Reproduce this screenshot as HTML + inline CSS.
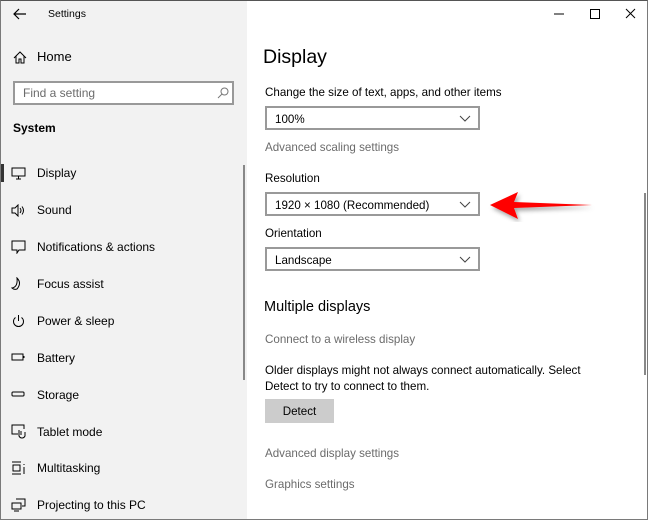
<!DOCTYPE html>
<html><head><style>
*{margin:0;padding:0;box-sizing:border-box}
body{width:648px;height:520px;overflow:hidden;font-family:"Liberation Sans",sans-serif;color:#000;position:relative;background:#fff}
.frame{position:absolute;left:0;top:0;width:648px;height:520px;border:1px solid #7a7a7a;border-top-color:#555;pointer-events:none;z-index:10}
.left{position:absolute;left:0;top:0;width:247px;height:520px;background:#f2f2f2}
.t{position:absolute;white-space:nowrap}
.s{font-size:12px}
.r{font-size:11.6px}
.g{color:#6b6b6b}
.dd{position:absolute;left:265px;width:215px;height:24px;border:2px solid #999;font-size:11.6px;padding:5px 0 0 8px}
.dd svg{position:absolute;right:7px;top:7px}
.ic{position:absolute;left:11px}
</style></head><body>
<div class="left">
<svg class="ic" style="left:13px;top:8px" width="14" height="12"><path d="M1 6H13M6 1L1 6L6 11" stroke="#000" fill="none" stroke-width="1.2"/></svg>
<div class="t" style="left:48px;top:8px;font-size:10.5px">Settings</div>
<svg class="ic" style="left:13px;top:51px" width="14" height="13"><path d="M1 7L7 1L13 7M3 5V12H6V8H8V12H11V5" stroke="#000" fill="none"/></svg>
<div class="t" style="left:37px;top:49px;font-size:13px">Home</div>
<div style="position:absolute;left:13px;top:81px;width:221px;height:24px;border:2px solid #999;background:#fff"></div>
<div class="t g" style="left:23px;top:86px;font-size:12px">Find a setting</div>
<svg style="position:absolute;left:217px;top:87px" width="12" height="12"><circle cx="7.5" cy="4.5" r="3.5" stroke="#777" fill="none"/><path d="M5 7L1 11" stroke="#777"/></svg>
<div class="t" style="left:13px;top:121px;font-size:12px;font-weight:bold">System</div>
<div style="position:absolute;left:0;top:164px;width:4px;height:18px;background:#333"></div>
<div style="position:absolute;left:243px;top:165px;width:2px;height:215px;background:#888"></div>
<svg class="ic" style="top:167px" width="16" height="13"><rect x="1" y="1" width="13" height="8" stroke="#000" fill="none"/><path d="M5 12H10M7.5 9V12" stroke="#000"/></svg>
<div class="t s" style="left:37px;top:166px">Display</div>
<svg class="ic" style="top:204px" width="16" height="13"><path d="M1 4H4L7 1V12L4 9H1Z M9 4Q11 6.5 9 9 M11 2.5Q14 6.5 11 10.5" stroke="#000" fill="none"/></svg>
<div class="t s" style="left:37px;top:203px">Sound</div>
<svg class="ic" style="top:240px" width="16" height="14"><path d="M1 1H14V10H8L6 13V10H1Z" stroke="#000" fill="none"/></svg>
<div class="t s" style="left:37px;top:240px">Notifications &amp; actions</div>
<svg class="ic" style="top:277px" width="16" height="14"><path d="M6 1Q11 6 6 12Q3 13 1 11Q7 10 6 1Z" stroke="#000" fill="none"/></svg>
<div class="t s" style="left:37px;top:277px">Focus assist</div>
<svg class="ic" style="top:314px" width="16" height="14"><path d="M4.5 3.5A5 5 0 1 0 10.5 3.5M7.5 1V7" stroke="#000" fill="none"/></svg>
<div class="t s" style="left:37px;top:314px">Power &amp; sleep</div>
<svg class="ic" style="top:352px" width="16" height="10"><rect x="1" y="2" width="11" height="6" stroke="#000" fill="none"/><path d="M13 4V6" stroke="#000"/></svg>
<div class="t s" style="left:37px;top:351px">Battery</div>
<svg class="ic" style="top:389px" width="16" height="10"><rect x="1" y="3" width="12" height="4" rx="1" stroke="#000" fill="none"/></svg>
<div class="t s" style="left:37px;top:388px">Storage</div>
<svg class="ic" style="top:424px" width="16" height="15"><path d="M7 10H1V1H13V5 M8 6V12Q9 14 11 14Q13 14 14 12V8 M10 7V11" stroke="#000" fill="none"/></svg>
<div class="t s" style="left:37px;top:425px">Tablet mode</div>
<svg class="ic" style="top:461px" width="16" height="14"><path d="M1 1H10M1 13H10M2 4H9V10H2ZM13 3V4M13 6V13" stroke="#000" fill="none"/></svg>
<div class="t s" style="left:37px;top:461px">Multitasking</div>
<svg class="ic" style="top:498px" width="16" height="14"><path d="M5 1H14V8H11M1 5H10V11H1ZM3 13H8" stroke="#000" fill="none"/></svg>
<div class="t s" style="left:37px;top:498px">Projecting to this PC</div>
</div>
<svg style="position:absolute;left:554px;top:7px" width="85" height="14"><path d="M0 7H10" stroke="#000"/><rect x="36.5" y="2.5" width="9" height="9" stroke="#000" fill="none"/><path d="M72 2L81 11M81 2L72 11" stroke="#000"/></svg>
<div class="t" style="left:263px;top:46px;font-size:19.5px">Display</div>
<div class="t r" style="left:265px;top:86px">Change the size of text, apps, and other items</div>
<div class="dd" style="top:106px">100%<svg width="12" height="7"><path d="M1 1L6 6L11 1" stroke="#444" fill="none"/></svg></div>
<div class="t r g" style="left:265px;top:141px">Advanced scaling settings</div>
<div class="t r" style="left:265px;top:172px">Resolution</div>
<div class="dd" style="top:192px">1920 × 1080 (Recommended)<svg width="12" height="7"><path d="M1 1L6 6L11 1" stroke="#444" fill="none"/></svg></div>
<div class="t r" style="left:265px;top:227px">Orientation</div>
<div class="dd" style="top:247px">Landscape<svg width="12" height="7"><path d="M1 1L6 6L11 1" stroke="#444" fill="none"/></svg></div>
<div class="t" style="left:264px;top:299px;font-size:14.5px">Multiple displays</div>
<div class="t r g" style="left:265px;top:333px">Connect to a wireless display</div>
<div class="t r" style="left:265px;top:363px;line-height:15.5px">Older displays might not always connect automatically. Select<br>Detect to try to connect to them.</div>
<div style="position:absolute;left:265px;top:399px;width:69px;height:24px;background:#ccc;font-size:11.6px;text-align:center;padding-top:6px">Detect</div>
<div class="t r g" style="left:265px;top:447px">Advanced display settings</div>
<div class="t r g" style="left:265px;top:478px">Graphics settings</div>
<div style="position:absolute;left:644px;top:193px;width:2px;height:182px;background:#888"></div>
<svg style="position:absolute;left:488px;top:185px" width="110" height="40"><defs><filter id="sh"><feDropShadow dx="2" dy="3" stdDeviation="2" flood-opacity="0.35"/></filter></defs><path d="M2 20L30 7L26 17L104 20L26 23L30 34Z" fill="#ff0000" filter="url(#sh)"/></svg>
<div class="frame"></div>
</body></html>
